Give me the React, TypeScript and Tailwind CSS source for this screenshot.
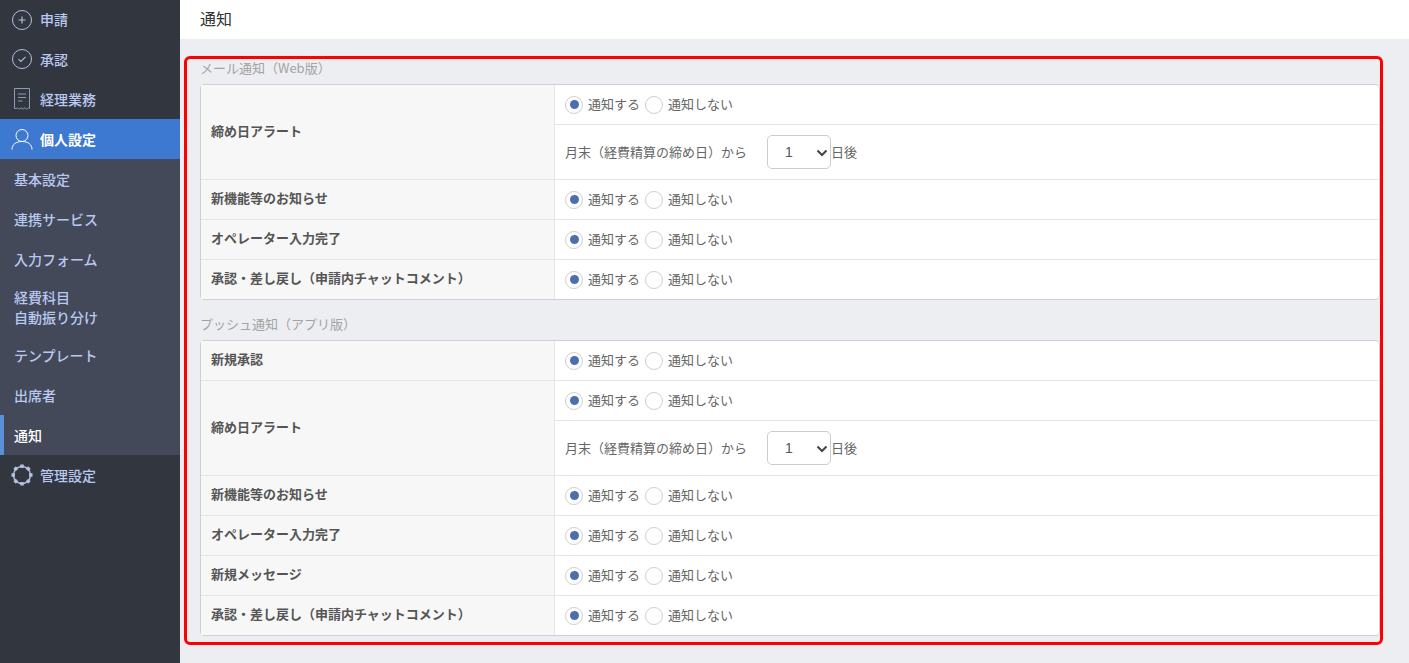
const font = '[font-family:"Noto_Sans_CJK_JP","Liberation_Sans",sans-serif]';

const PlusIcon = () => (
  <svg width="22" height="22" viewBox="0 0 22 22" fill="none" stroke="#b4c0e0" strokeWidth="1">
    <circle cx="11" cy="11" r="9.5" />
    <path d="M11 7.5v7M7.5 11h7" strokeWidth="1.2" />
  </svg>
);

const CheckIcon = () => (
  <svg width="22" height="22" viewBox="0 0 22 22" fill="none" stroke="#b4c0e0" strokeWidth="1">
    <circle cx="11" cy="11" r="9.5" />
    <path d="M7.5 11.2l2.4 2.3 4.6-4.6" strokeWidth="1.1" />
  </svg>
);

const ReceiptIcon = () => (
  <svg width="22" height="22" viewBox="0 0 22 22" fill="none" stroke="#8f9ab5" strokeWidth="1">
    <path d="M3.500 20.500v-20h15v20q-.9-1.200-1.900 0t-1.900 0-1.900 0-1.800 0-1.800 0-1.900 0-1.900 0z" />
    <path d="M7 6h8M7 9.500h8M7 13h4.500" strokeWidth="1.200" />
  </svg>
);

const UserIcon = () => (
  <svg width="22" height="22" viewBox="0 0 22 22" fill="none" stroke="#ffffff" strokeWidth="1">
    <circle cx="11" cy="7.500" r="6" />
    <path d="M1 21.500c0-5 4-8 10-8s10 3 10 8" />
  </svg>
);

const gearAngles = [0, 45, 90, 135, 180, 225, 270, 315];

const GearIcon = () => (
  <svg width="22" height="22" viewBox="0 0 22 22" fill="none">
    <circle cx="11" cy="11" r="8.500" stroke="#b4c0e0" strokeWidth="1.400" />
    {gearAngles.map((a) => (
      <rect key={a} x="9.200" y="0.500" width="3.600" height="3.400" fill="#b4c0e0" transform={`rotate(${a} 11 11)`} />
    ))}
  </svg>
);

const MainItem = ({ icon, label, active, first }: { icon: React.ReactNode; label: string; active?: boolean; first?: boolean }) => (
  <div className={`flex items-center pl-[11px] text-[14px] ${first ? 'h-[39px]' : 'h-10'} ${active ? 'bg-[#3d79d0] font-bold text-white' : 'font-medium text-[#b9c8f0]'}`}>
    <span className="mr-[7px] flex w-[22px] justify-center">{icon}</span>
    {label}
  </div>
);

const SubItem = ({ label, active }: { label: React.ReactNode; active?: boolean }) => (
  <div className={`flex min-h-10 items-center border-l-[4px] py-2 pl-[10px] text-[14px] leading-5 font-medium ${active ? 'border-[#5b8fd9] text-white' : 'border-transparent text-[#b9c8f0]'}`}>
    <span>{label}</span>
  </div>
);

const Radio = ({ checked, label }: { checked?: boolean; label: string }) => (
  <label className="flex items-center">
    <span className="flex h-[18px] w-[18px] items-center justify-center rounded-full border border-[#cfcfcf] bg-white">
      {checked && <span className="h-[9px] w-[9px] rounded-full bg-[#4a6fae]" />}
    </span>
    <span className="ml-[5px] -translate-y-px">{label}</span>
  </label>
);

const RadioPair = () => (
  <div className="flex h-[39px] items-center gap-[5px] pl-[10px]">
    <Radio checked label="通知する" />
    <Radio label="通知しない" />
  </div>
);

const DeadlineRow = () => (
  <div className="flex h-[55px] items-center border-t border-[#e5e5e5] pl-[10px]">
    <span className="w-[202px]">月末（経費精算の締め日）から</span>
    <div className="relative">
      <select
        defaultValue="1"
        className="block h-[34px] w-[64px] appearance-none rounded-[5px] border border-[#cccccc] bg-white pl-[17px] text-[14px] text-[#555555] [font-family:'Liberation_Sans',sans-serif]"
      >
        <option value="1">1</option>
      </select>
      <svg className="pointer-events-none absolute top-[14px] right-[3px]" width="12" height="8" viewBox="0 0 12 8" fill="none" stroke="#444444" strokeWidth="2">
        <path d="M1.500 1.500L6 6l4.500-4.500" />
      </svg>
    </div>
    <span>日後</span>
  </div>
);

type Row = { name: string; deadline?: boolean };

const Table = ({ rows }: { rows: Row[] }) => (
  <div className="rounded border border-[#d0d0d0] bg-white text-[13px] text-[#666666]">
    {rows.map((row, i) => (
      <div key={row.name} className={`flex ${i > 0 ? 'border-t border-[#e5e5e5]' : ''}`}>
        <div className={`flex w-[354px] shrink-0 items-center border-r border-[#e5e5e5] bg-[#f7f7f7] pl-[10px] font-bold text-[#555555] ${row.deadline ? 'pb-[2px]' : 'pb-1'}`}>
          {row.name}
        </div>
        <div className="min-w-0 flex-1">
          <RadioPair />
          {row.deadline && <DeadlineRow />}
        </div>
      </div>
    ))}
  </div>
);

const mailRows: Row[] = [
  { name: '締め日アラート', deadline: true },
  { name: '新機能等のお知らせ' },
  { name: 'オペレーター入力完了' },
  { name: '承認・差し戻し（申請内チャットコメント）' },
];

const pushRows: Row[] = [
  { name: '新規承認' },
  { name: '締め日アラート', deadline: true },
  { name: '新機能等のお知らせ' },
  { name: 'オペレーター入力完了' },
  { name: '新規メッセージ' },
  { name: '承認・差し戻し（申請内チャットコメント）' },
];

export default function App() {
  return (
    <div className={`flex h-screen overflow-hidden bg-[#edeef2] ${font}`}>
      <aside className="w-[180px] shrink-0 bg-[#32363f]">
        <MainItem icon={<PlusIcon />} label="申請" first />
        <MainItem icon={<CheckIcon />} label="承認" />
        <MainItem icon={<ReceiptIcon />} label="経理業務" />
        <MainItem icon={<UserIcon />} label="個人設定" active />
        <div className="bg-[#434958]">
          <SubItem label="基本設定" />
          <SubItem label="連携サービス" />
          <SubItem label="入力フォーム" />
          <SubItem label={<>経費科目<br />自動振り分け</>} />
          <SubItem label="テンプレート" />
          <SubItem label="出席者" />
          <SubItem label="通知" active />
        </div>
        <MainItem icon={<GearIcon />} label="管理設定" />
      </aside>

      <main className="relative min-w-0 flex-1">
        <header className="flex h-[39px] items-center bg-white pb-[3px] pl-5 text-[16px] text-[#333333]">通知</header>
        <div className="pr-[29px] pl-5">
          <h2 className="flex h-[45px] items-end pb-[6px] text-[13px] leading-5 font-normal text-[#a3a3a3]">メール通知（Web版）</h2>
          <Table rows={mailRows} />
          <h2 className="flex h-10 items-end pb-[6px] text-[13px] leading-5 font-normal text-[#a3a3a3]">プッシュ通知（アプリ版）</h2>
          <Table rows={pushRows} />
        </div>
        {/* 赤枠は画面の上に重ねた注釈 */}
        <div className="pointer-events-none absolute top-[56px] left-[4px] h-[589px] w-[1199px] rounded-md border-[3px] border-[#ff0000]" />
      </main>
    </div>
  );
}
